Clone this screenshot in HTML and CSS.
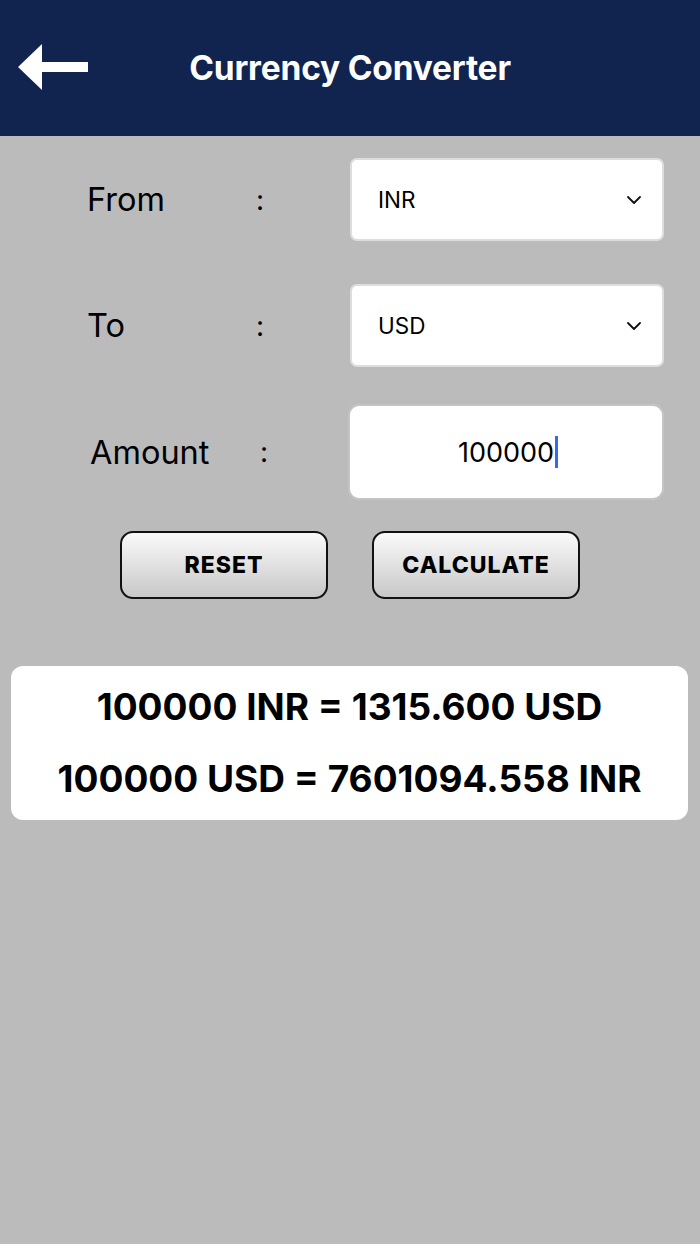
FILE: index.html
```html
<!DOCTYPE html>
<html lang="en">
<head>
<meta charset="utf-8">
<title>Currency Converter</title>
<link rel="stylesheet" href="styles.css">
</head>
<body>
<header class="topbar">
  <svg class="back" width="72" height="48" viewBox="0 0 72 48" aria-label="Back">
    <polygon points="0,23 24,0 24,18 70,18 70,28 24,28 24,46" fill="#ffffff"/>
  </svg>
  <h1 class="title">Currency Converter</h1>
  <span></span>
</header>
<main class="content">
  <div class="row row-from">
    <span class="label">From</span>
    <span class="colon">:</span>
    <div class="select">
      <span>INR</span>
      <svg class="chev" width="14" height="8" viewBox="0 0 14 8"><polyline points="1,1 7,7 13,1" fill="none" stroke="#111" stroke-width="1.8" stroke-linecap="round" stroke-linejoin="round"/></svg>
    </div>
  </div>
  <div class="row row-to">
    <span class="label">To</span>
    <span class="colon">:</span>
    <div class="select">
      <span>USD</span>
      <svg class="chev" width="14" height="8" viewBox="0 0 14 8"><polyline points="1,1 7,7 13,1" fill="none" stroke="#111" stroke-width="1.8" stroke-linecap="round" stroke-linejoin="round"/></svg>
    </div>
  </div>
  <div class="row row-amount">
    <span class="label label-amount">Amount</span>
    <span class="colon">:</span>
    <div class="amount"><span>100000</span><span class="caret"></span></div>
  </div>
  <div class="buttons">
    <button class="btn">RESET</button>
    <button class="btn">CALCULATE</button>
  </div>
  <section class="result">
    <p class="line">100000 INR = 1315.600 USD</p>
    <p class="line">100000 USD = 7601094.558 INR</p>
  </section>
</main>
</body>
</html>
```

FILE: styles.css
```css
html, body {
  margin: 0;
  padding: 0;
}
body {
  width: 700px;
  min-height: 1244px;
  background: #bbbbbb;
  font-family: Inter, "Noto Sans", "Liberation Sans", sans-serif;
  color: #000;
}
.topbar {
  height: 136px;
  background: #11234f;
  display: grid;
  grid-template-columns: 1fr auto 1fr;
  align-items: center;
}
.back {
  display: block;
  margin-left: 18px;
  margin-top: -1px;
}
.title {
  margin: 0;
  color: #fff;
  font-size: 33.5px;
  font-weight: 700;
  letter-spacing: -0.2px;
}
.content {
  display: flex;
  flex-direction: column;
}
.row {
  display: flex;
  align-items: center;
  padding-left: 87px;
}
.row-from { margin-top: 22px; }
.row-to { margin-top: 43px; }
.row-amount { margin-top: 37px; }
.label {
  width: 169px;
  font-size: 32.5px;
  font-weight: 400;
}
.label-amount {
  margin-left: 3px;
  width: 170px;
}
.colon {
  font-size: 28px;
  width: 20px;
}
.select {
  margin-left: auto;
  margin-right: 36px;
  width: 314px;
  height: 83px;
  box-sizing: border-box;
  background: #fff;
  border: 2px solid #dddddd;
  border-radius: 7px;
  display: flex;
  align-items: center;
  justify-content: space-between;
  padding: 0 21px 0 26px;
  font-size: 22.5px;
}
.chev { display: block; }
.amount {
  margin-left: auto;
  margin-right: 36px;
  width: 316px;
  height: 96px;
  box-sizing: border-box;
  background: #fff;
  border: 2px solid #c4c4c4;
  border-radius: 11px;
  display: flex;
  align-items: center;
  justify-content: center;
  font-size: 27px;
  padding-left: 4px;
}
.caret {
  display: inline-block;
  width: 3px;
  height: 32px;
  background: #3a67f0;
  margin-left: 1px;
}
.buttons {
  display: flex;
  gap: 44px;
  padding-left: 120px;
  margin-top: 31px;
}
.btn {
  width: 208px;
  height: 68px;
  box-sizing: border-box;
  border: 2px solid #111;
  border-radius: 13px;
  background: linear-gradient(#fafafa, #c8c8c8);
  font-family: Inter, "Noto Sans", "Liberation Sans", sans-serif;
  font-size: 23px;
  font-weight: 800;
  letter-spacing: 1px;
  color: #000;
  padding: 0;
}
.result {
  margin: 67px 12px 0 11px;
  background: #fff;
  border-radius: 12px;
  padding: 5px 0;
  text-align: center;
}
.line {
  margin: 0;
  line-height: 72px;
  font-size: 37px;
  font-weight: 700;
}
```
